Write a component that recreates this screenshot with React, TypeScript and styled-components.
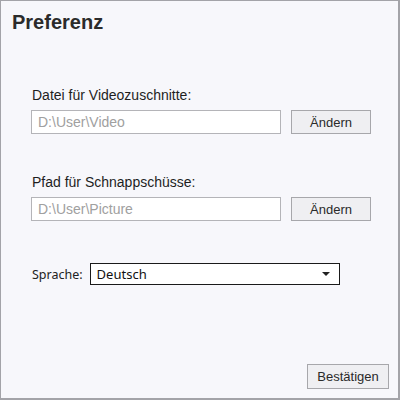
import React from "react";
import styled, { createGlobalStyle } from "styled-components";

const Global = createGlobalStyle`
  html, body { margin: 0; padding: 0; background: #ffffff; }
  * { box-sizing: border-box; }
`;

const Window = styled.div`
  width: 400px;
  height: 400px;
  background: #f7f7fb;
  border: 1px solid #a3a3a8;
  border-right-width: 2px;
  border-bottom-width: 2px;
  display: flex;
  flex-direction: column;
  font-family: "Liberation Sans", Arial, sans-serif;
  color: #222;
`;

const Title = styled.h1`
  margin: 0;
  padding: 10px 0 0 11px;
  font-size: 20px;
  line-height: 22px;
  font-weight: bold;
  color: #2b2b2b;
`;

const Form = styled.div`
  display: flex;
  flex-direction: column;
  padding: 54px 0 0 30px;
`;

const Field = styled.div<{ $gap?: number }>`
  display: flex;
  flex-direction: column;
  margin-bottom: ${(p) => p.$gap ?? 0}px;
`;

const Label = styled.label`
  font-size: 14px;
  line-height: 16px;
  color: #1e1e1e;
  padding-left: 1px;
  margin-bottom: 7px;
`;

const Row = styled.div`
  display: flex;
  align-items: center;
  gap: 10px;
`;

const PathInput = styled.input`
  width: 250px;
  height: 24px;
  border: 1px solid #b4b4b8;
  background: #ffffff;
  padding: 0 6px;
  font-family: "Liberation Sans", Arial, sans-serif;
  font-size: 14px;
  color: #a0a0a0;
  outline: none;
`;

const Button = styled.button<{ $w: number }>`
  width: ${(p) => p.$w}px;
  height: 24px;
  border: 1px solid #a7a7ab;
  background: #efeff2;
  font-family: "Liberation Sans", Arial, sans-serif;
  font-size: 13px;
  color: #2a2a2a;
  padding: 0;
  cursor: pointer;
`;

const LangRow = styled.div`
  display: flex;
  align-items: center;
  gap: 7px;
  margin-top: 42px;
`;

const LangLabel = styled.span`
  font-family: "Noto Sans", "Open Sans", sans-serif;
  font-size: 12.5px;
  color: #222;
  padding-left: 1px;
`;

const Select = styled.div`
  position: relative;
  width: 250px;
  height: 22px;
  border: 1px solid #1a1a1a;
  background: #ffffff;
  display: flex;
  align-items: center;
  padding-left: 6px;
  font-family: "Noto Sans", "Open Sans", sans-serif;
  font-size: 13px;
  color: #111;
`;

const Caret = styled.span`
  position: absolute;
  right: 9px;
  top: 8px;
  width: 0;
  height: 0;
  border-left: 4px solid transparent;
  border-right: 4px solid transparent;
  border-top: 4px solid #222;
`;

const Footer = styled.div`
  margin-top: auto;
  display: flex;
  justify-content: flex-end;
  padding: 0 9px 9px 0;
`;

const ConfirmButton = styled(Button)`
  height: 25px;
  font-size: 13px;
`;

export default function App() {
  return (
    <>
      <Global />
      <Window>
        <Title>Preferenz</Title>
        <Form>
          <Field $gap={40}>
            <Label>Datei für Videozuschnitte:</Label>
            <Row>
              <PathInput readOnly value="D:\User\Video" />
              <Button $w={80}>Ändern</Button>
            </Row>
          </Field>
          <Field>
            <Label>Pfad für Schnappschüsse:</Label>
            <Row>
              <PathInput readOnly value="D:\User\Picture" />
              <Button $w={80}>Ändern</Button>
            </Row>
          </Field>
          <LangRow>
            <LangLabel>Sprache:</LangLabel>
            <Select>
              Deutsch
              <Caret />
            </Select>
          </LangRow>
        </Form>
        <Footer>
          <ConfirmButton $w={82}>Bestätigen</ConfirmButton>
        </Footer>
      </Window>
    </>
  );
}
